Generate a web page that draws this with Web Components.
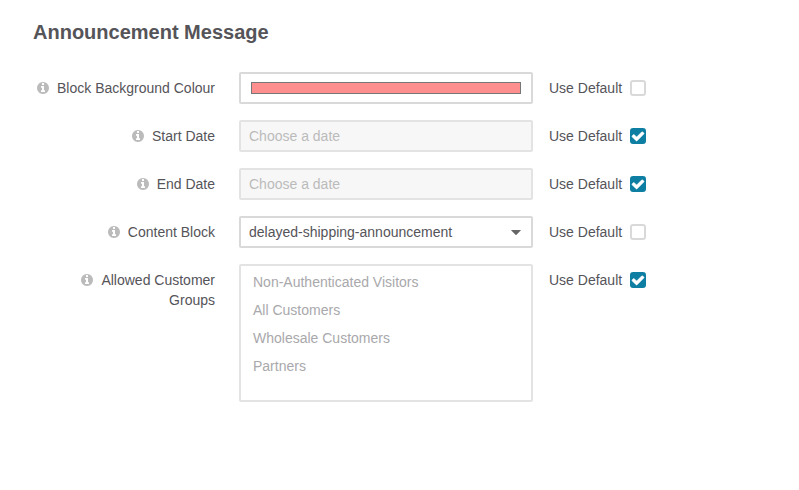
<!DOCTYPE html>
<html lang="en">
<head>
<meta charset="utf-8">
<title>Announcement Message</title>
<style>
body{margin:0;background:#fff;color:#555459;font:14px/20px "Liberation Sans",Arial,sans-serif}
</style>
</head>
<body>
<settings-section>
  <span slot="title">Announcement Message</span>
  <field-row label="Block Background Colour"><color-field style="--colour:#ff8f8f"></color-field></field-row>
  <field-row label="Start Date" checked><date-field></date-field></field-row>
  <field-row label="End Date" checked><date-field></date-field></field-row>
  <field-row label="Content Block"><select-field>delayed-shipping-announcement</select-field></field-row>
  <field-row label="Allowed Customer Groups" checked>
    <list-field><list-option>Non-Authenticated Visitors</list-option><list-option>All Customers</list-option><list-option>Wholesale Customers</list-option><list-option>Partners</list-option></list-field>
  </field-row>
</settings-section>
<script>
const define = (name, html) => customElements.define(name, class extends HTMLElement {
  constructor() {
    super();
    this.attachShadow({mode: 'open'}).innerHTML = html;
  }
  connectedCallback() {
    const label = this.shadowRoot.querySelector('[data-label]');
    if (label) label.textContent = this.getAttribute('label');
    const box = this.shadowRoot.querySelector('check-box');
    if (box) box.toggleAttribute('checked', this.hasAttribute('checked'));
  }
});

define('info-icon', `<style>:host{display:inline-block;width:12px;height:12px;vertical-align:-1px;margin-right:8px}svg{display:block;width:12px;height:12px;fill:#bbb}</style>
<svg viewBox="0 128 1536 1536"><path d="M1024 1376v-160q0-14-9-23t-23-9h-96v-512q0-14-9-23t-23-9h-320q-14 0-23 9t-9 23v160q0 14 9 23t23 9h96v320h-96q-14 0-23 9t-9 23v160q0 14 9 23t23 9h448q14 0 23-9t9-23zm-128-896v-192q0-14-9-23t-23-9h-192q-14 0-23 9t-9 23v192q0 14 9 23t23 9h192q14 0 23-9t9-23zm640 416q0 209-103 385.5t-279.5 279.5-385.5 103-385.5-103-279.5-279.5-103-385.5 103-385.5 279.5-279.5 385.5-103 385.5 103 279.5 279.5 103 385.5z"/></svg>`);

define('check-box', `<style>:host{display:grid;place-items:center;box-sizing:border-box;width:16px;height:16px;border:2px solid #d9d9d9;border-radius:3px;background:#fff}
:host([checked]){border-color:#0e7fa3;background:#0e7fa3}svg{display:none;width:12px;height:9px;overflow:visible;fill:#fff;stroke:#fff;stroke-width:70}:host([checked]) svg{display:block}</style>
<svg viewBox="121 370 1550 1152"><path d="M1671 566q0 40-28 68l-724 724-136 136q-28 28-68 28t-68-28l-136-136-362-362q-28-28-28-68t28-68l136-136q28-28 68-28t68 28l294 295 656-657q28-28 68-28t68 28l136 136q28 28 28 68z"/></svg>`);

define('color-field', `<style>:host{display:block;box-sizing:border-box;height:32px;padding:8px 10px;border:2px solid #d9d9d9;border-radius:2px}
div{box-sizing:border-box;height:12px;border:1px solid #777;background:var(--colour)}</style><div></div>`);

define('date-field', `<style>:host{display:block;box-sizing:border-box;height:32px;padding:4px 8px;border:2px solid #e3e3e3;border-radius:2px;background:#f7f7f7;color:#bbb}</style>Choose a date`);

define('select-field', `<style>:host{display:flex;justify-content:space-between;align-items:center;box-sizing:border-box;height:32px;padding:0 10px 0 8px;border:2px solid #d9d9d9;border-radius:2px}
svg{width:10px;height:5px;fill:#666}</style><span><slot></slot></span><svg viewBox="0 0 10 5"><path d="M.6 0h8.8q.8 0 .3.6L5.5 4.8q-.5.4-1 0L.3.6Q-.2 0 .6 0z"/></svg>`);

define('list-option', `<style>:host{display:block;padding:4px 12px}</style><slot></slot>`);

define('list-field', `<style>:host{display:block;box-sizing:border-box;height:138px;border:2px solid #e3e3e3;border-radius:2px;padding:2px 0;color:#a9a8ab}</style><slot></slot>`);

define('field-row', `<style>:host{display:grid;grid-template-columns:206px 294px auto;justify-content:start;align-items:start}
.label{padding:6px 24px 6px 0;text-align:right}.default{display:flex;align-items:center;gap:8px;padding:6px 0 0 16px}</style>
<div class="label"><info-icon></info-icon><span data-label></span></div><div><slot></slot></div><div class="default"><span>Use Default</span><check-box></check-box></div>`);

define('settings-section', `<style>:host{display:block;padding:20px 33px}h2{margin:0 0 28px;font-size:20px;line-height:24px;font-weight:700}
.rows{display:grid;gap:16px}</style><h2><slot name="title"></slot></h2><div class="rows"><slot></slot></div>`);
</script>
</body>
</html>
